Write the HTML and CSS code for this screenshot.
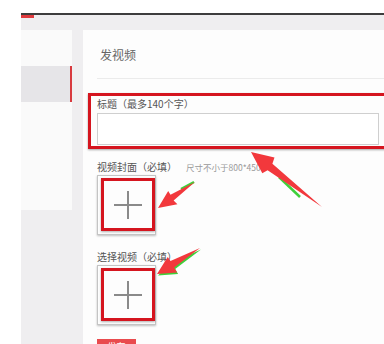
FILE: index.html
```html
<!DOCTYPE html>
<html lang="zh-CN">
<head>
  <meta charset="UTF-8">
  <meta name="viewport" content="width=device-width, initial-scale=1.0">
  <title>发视频</title>
  <link rel="stylesheet" href="styles.css">
</head>
<body>
  <div class="app">
    <div class="topline"></div>
    <div class="topbar"><div class="tab"></div></div>

    <div class="layout">
      <div class="sidebar">
        <div class="side-item active"></div>
      </div>

      <div class="main">
        <div class="main-title">发视频</div>
        <div class="divider"></div>

        <div class="mark-field">
          <div class="label">标题（最多140个字）</div>
          <div class="input"></div>
        </div>

        <div class="label row">视频封面（必填）<span class="hint">尺寸不小于800*450</span></div>
        <div class="upload">
          <div class="mark-box">
            <svg width="30" height="30" viewBox="0 0 30 30"><path d="M15 1v28M1 15h28" stroke="#8a8a8a" stroke-width="2" fill="none"/></svg>
          </div>
        </div>

        <div class="label row second">选择视频（必填）</div>
        <div class="upload">
          <div class="mark-box">
            <svg width="30" height="30" viewBox="0 0 30 30"><path d="M15 1v28M1 15h28" stroke="#8a8a8a" stroke-width="2" fill="none"/></svg>
          </div>
        </div>

        <div class="btn">发布</div>
      </div>
    </div>
  </div>

  <!-- 标注箭头 -->
  <svg class="arrows" width="384" height="344" viewBox="0 0 384 344">
    <path d="M279 177 L300 197" stroke="#3fcf3a" stroke-width="2.5"/>
    <polygon points="251,152 274.5,157.5 272.4,163.8 322,207 267.6,170.2 262.3,173.3" fill="#f2383c"/>

    <path d="M181 189 L194 182" stroke="#3fcf3a" stroke-width="2.5"/>
    <polygon points="158,208 168.2,191 170.5,194.8 195,182 173.6,200.5 177.4,204.2" fill="#f2383c"/>

    <polygon points="158,275.5 171.5,262.5 201,249.5 175.2,269 178.1,273.9" fill="#3fcf3a"/>
    <polygon points="157,274 167.7,257 170.5,261 200,248 174.2,267.5 177.1,272.4" fill="#f2383c"/>
  </svg>
</body>
</html>
```

FILE: styles.css
```css
body {
  margin: 0;
  background: #fff;
  font-family: "Noto Sans CJK SC", "Noto Sans", sans-serif;
  color: #555;
}
.app {
  margin: 13px 0 0 21px;
  height: 331px;
  background: #efeef0;
  overflow: hidden;
}
.topline {
  height: 2px;
  background: #3d3d3d;
}
.topbar {
  height: 15px;
}
.tab {
  width: 13px;
  height: 3px;
  background: #e03a3e;
}
.layout {
  display: flex;
  gap: 11px;
}
.sidebar {
  width: 51px;
  height: 144px;
  padding-top: 36px;
  background: #fafafa;
  flex-shrink: 0;
}
.side-item {
  height: 36px;
}
.side-item.active {
  background: #e6e5e8;
  border-right: 2px solid #d83a3f;
}
.main {
  flex: 1;
  height: 320px;
  padding-left: 5px;
  background: #fdfdfd;
}
.main-title {
  margin: 17px 0 0 12px;
  font-size: 12px;
  line-height: 16px;
  color: #666;
}
.divider {
  margin: 15px 0 0 9px;
  height: 1px;
  background: #ebebeb;
}
.mark-field {
  margin: 14px -20px 0 0;
  padding: 1px 0 0 6px;
  height: 49px;
  border: 3px solid #d5151f;
  box-shadow: 0 1px 2px rgba(0,0,0,0.35);
}
.label {
  font-size: 10px;
  line-height: 14px;
  color: #555;
  white-space: nowrap;
}
.input {
  margin-top: 2px;
  width: 280px;
  height: 30px;
  border: 1px solid #cfcfcf;
  background: #fff;
}
.row {
  margin: 11px 0 0 9px;
}
.row.second {
  margin-top: 15px;
}
.hint {
  margin-left: 9px;
  font-size: 8.5px;
  color: #999;
}
.upload {
  margin: 1px 0 0 9px;
  width: 54px;
  height: 56px;
  padding: 2px 0 0 3px;
  border: 1px solid #c4c4c4;
  box-shadow: 0 1px 2px rgba(0,0,0,0.25);
  box-sizing: content-box;
}
.mark-box {
  width: 48px;
  height: 47px;
  border: 3px solid #d5151f;
  display: flex;
  align-items: center;
  justify-content: center;
  box-shadow: 0 1px 2px rgba(0,0,0,0.3);
}
.btn {
  margin: 14px 0 0 9px;
  width: 39px;
  height: 24px;
  background: #e94b4e;
  color: #fff;
  font-size: 9px;
  line-height: 16px;
  text-align: center;
}
.arrows {
  position: absolute;
  top: 0;
  left: 0;
  pointer-events: none;
}
```
